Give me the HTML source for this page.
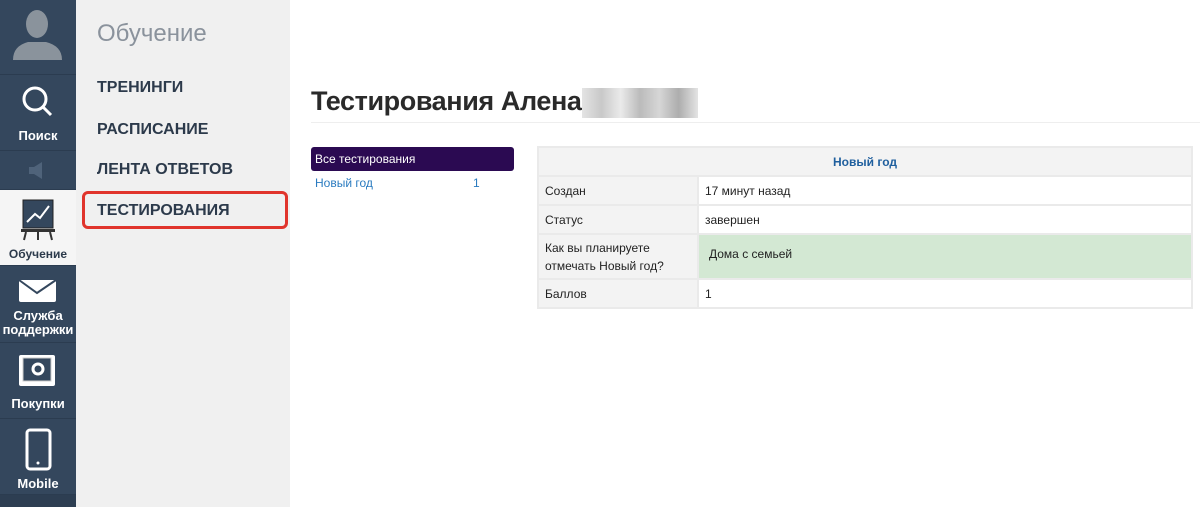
<!DOCTYPE html>
<html><head><meta charset="utf-8"><style>
*{margin:0;padding:0;box-sizing:border-box}
body{width:1200px;height:507px;overflow:hidden;background:#fff;font-family:"Liberation Sans",sans-serif;position:relative}
.side{position:absolute;left:0;top:0;width:76px;height:507px;background:#34475d}
.it{position:absolute;left:0;width:76px;text-align:center;color:#fff;font-weight:bold;font-size:13px;border-bottom:1px solid #2b3c50}
.panel{position:absolute;left:76px;top:0;width:214px;height:507px;background:#f0f0f0}
.panel h2{position:absolute;left:21px;top:20px;font-weight:normal;font-size:24px;color:#8a929c}
.nav{position:absolute;left:21px;font-weight:bold;font-size:16px;color:#2c3a4b}
.box{position:absolute;left:82px;top:191px;width:206px;height:38px;border:3px solid #e0342c;border-radius:6px}
h1{position:absolute;left:311px;top:86px;font-size:27px;color:#2a2a2a;letter-spacing:-0.4px;white-space:nowrap}
.blur{position:absolute;left:582px;top:88px;width:116px;height:30px;background:linear-gradient(90deg,#ddd,#bbb,#e5e5e5,#aaa,#ccc,#999,#ddd);opacity:.8}
.hr{position:absolute;left:311px;top:122px;width:889px;height:1px;background:#eee}
.all{position:absolute;left:311px;top:147px;width:203px;height:24px;background:#2b0a52;border-radius:3px;color:#fff;font-size:12px;padding:5px 4px}
.ny{position:absolute;top:176px;font-size:12px;color:#2a7bc0}
table{position:absolute;left:537px;top:146px;width:656px;border-collapse:collapse;font-size:12px;color:#222}
td{border:2px solid #eaeaea;padding:0 6px;height:29px}
td.l{background:#f3f3f3;width:160px}
</style></head><body>
<div class="side">
 <div class="it" style="top:0;height:75px"><svg width="76" height="75"><ellipse cx="37" cy="24" rx="11" ry="14" fill="#8a939c"/><path d="M13 60 Q13 46 28 42 L46 42 Q62 46 62 60Z" fill="#8a939c"/></svg></div>
 <div class="it" style="top:75px;height:76px"><svg width="76" height="42"><circle cx="35" cy="24" r="11" fill="none" stroke="#fff" stroke-width="3"/><line x1="43" y1="32" x2="51" y2="40" stroke="#fff" stroke-width="3"/></svg><div style="margin-top:8px">Поиск</div></div>
 <div class="it" style="top:151px;height:39px"><svg width="76" height="39"><rect x="29" y="16" width="5" height="7" fill="#4f637a"/><path d="M34 16 L42 11 L42 28 L34 23Z" fill="#4f637a"/></svg></div>
 <div class="it" style="top:190px;height:76px;background:#f5f5f5;color:#2c3a4b;font-size:12px"><svg width="76" height="52"><rect x="23" y="10" width="30" height="28" fill="#34475d" stroke="#222" stroke-width="1"/><path d="M27 32 L35 24 L40 28 L49 16" stroke="#fff" stroke-width="2" fill="none"/><rect x="21" y="39" width="34" height="3" fill="#333"/><path d="M26 42 L24 50 M38 42 V50 M50 42 L52 50" stroke="#333" stroke-width="2"/></svg><div style="margin-top:2px">Обучение</div></div>
 <div class="it" style="top:266px;height:77px;line-height:14px"><svg width="76" height="40"><rect x="19" y="14" width="37" height="22" rx="2" fill="#fff"/><path d="M19 14 L37 27 L56 14" stroke="#34475d" stroke-width="2" fill="none"/></svg><div>Служба<br>поддержки</div></div>
 <div class="it" style="top:343px;height:76px"><svg width="76" height="46"><rect x="19" y="12" width="36" height="31" rx="2" fill="#fff"/><rect x="23" y="15" width="28" height="23" fill="#34475d" stroke="#ccc"/><circle cx="38" cy="26" r="5" fill="none" stroke="#fff" stroke-width="3"/></svg><div style="margin-top:4px">Покупки</div></div>
 <div class="it" style="top:419px;height:76px"><svg width="76" height="52"><rect x="27" y="11" width="23" height="39" rx="3" fill="none" stroke="#fff" stroke-width="3"/><circle cx="38" cy="44" r="1.5" fill="#fff"/></svg><div style="margin-top:2px">Mobile</div></div>
 <div style="position:absolute;top:495px;width:76px;height:12px;background:#2d3e52"></div>
</div>
<div class="panel">
 <h2>Обучение</h2>
 <div class="nav" style="top:79px">ТРЕНИНГИ</div>
 <div class="nav" style="top:121px">РАСПИСАНИЕ</div>
 <div class="nav" style="top:161px">ЛЕНТА ОТВЕТОВ</div>
 <div class="nav" style="top:202px">ТЕСТИРОВАНИЯ</div>
</div>
<div class="box"></div>
<h1>Тестирования Алена</h1>
<div class="blur"></div>
<div class="hr"></div>
<div class="all">Все тестирования</div>
<div class="ny" style="left:315px">Новый год</div>
<div class="ny" style="left:473px">1</div>
<table>
<tr><td colspan="2" style="background:#f3f3f3;text-align:center;font-weight:bold;color:#1f5f9e">Новый год</td></tr>
<tr><td class="l">Создан</td><td>17 минут назад</td></tr>
<tr><td class="l">Статус</td><td>завершен</td></tr>
<tr><td class="l" style="height:45px;line-height:18px">Как вы планируете<br>отмечать Новый год?</td><td style="background:#d3e8d3;padding-left:10px;padding-bottom:6px">Дома с семьей</td></tr>
<tr><td class="l">Баллов</td><td>1</td></tr>
</table>
</body></html>
